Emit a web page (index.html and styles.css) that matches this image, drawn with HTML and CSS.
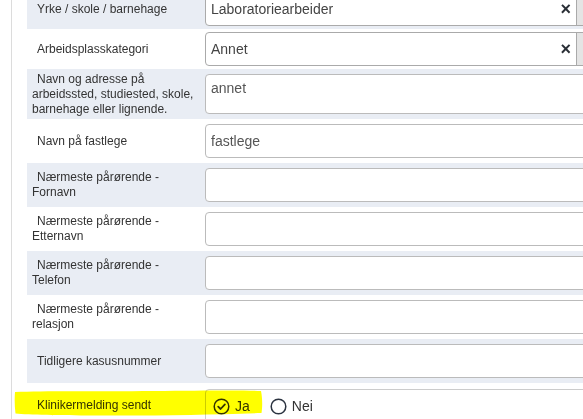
FILE: index.html
```html
<!DOCTYPE html>
<html lang="no">
<head>
<meta charset="utf-8">
<title>Skjema</title>
<link rel="stylesheet" href="styles.css">
</head>
<body>
<div class="page">
  <div class="form">
    <div class="row alt">
      <div class="label">Yrke / skole / barnehage</div>
      <div class="field sel">
        <div class="control select"><span class="sel-text">Laboratoriearbeider</span><span class="clear">×</span><span class="arrow"><span class="tri"></span></span></div>
      </div>
    </div>
    <div class="row">
      <div class="label">Arbeidsplasskategori</div>
      <div class="field sel">
        <div class="control select"><span class="sel-text">Annet</span><span class="clear">×</span><span class="arrow"><span class="tri"></span></span></div>
      </div>
    </div>
    <div class="row alt">
      <div class="label">Navn og adresse på arbeidssted, studiested, skole, barnehage eller lignende.</div>
      <div class="field">
        <div class="control area">annet</div>
      </div>
    </div>
    <div class="row">
      <div class="label">Navn på fastlege</div>
      <div class="field"><div class="control">fastlege</div></div>
    </div>
    <div class="row alt">
      <div class="label">Nærmeste pårørende - Fornavn</div>
      <div class="field"><div class="control"></div></div>
    </div>
    <div class="row">
      <div class="label">Nærmeste pårørende - Etternavn</div>
      <div class="field"><div class="control"></div></div>
    </div>
    <div class="row alt">
      <div class="label">Nærmeste pårørende - Telefon</div>
      <div class="field"><div class="control"></div></div>
    </div>
    <div class="row">
      <div class="label">Nærmeste pårørende - relasjon</div>
      <div class="field"><div class="control"></div></div>
    </div>
    <div class="row alt">
      <div class="label">Tidligere kasusnummer</div>
      <div class="field"><div class="control"></div></div>
    </div>
    <div class="row">
      <div class="label">Klinikermelding sendt</div>
      <div class="field radio-field">
        <div class="radios">
          <span class="opt">
            <svg class="rb" width="17" height="17" viewBox="0 0 17 17"><circle cx="8.5" cy="8.5" r="7.3" fill="none" stroke="#333" stroke-width="1.5"/><path d="M5.2 8.7 L7.6 11 L11.9 6.4" fill="none" stroke="#333" stroke-width="1.8" stroke-linecap="round" stroke-linejoin="round"/></svg>
            <span>Ja</span>
          </span>
          <span class="opt">
            <svg class="rb" width="17" height="17" viewBox="0 0 17 17"><circle cx="8.5" cy="8.5" r="7.3" fill="none" stroke="#2b3340" stroke-width="1.5"/></svg>
            <span>Nei</span>
          </span>
        </div>
      </div>
    </div>
  </div>
  <svg class="highlight" width="250" height="29" viewBox="0 0 250 29"><path d="M1 3 C30 1.5 80 2.5 140 2 C190 1.5 230 1 247 2 C248.5 9 248.5 18 247.5 24 C200 25.5 140 27 80 26.5 C45 26.3 15 26 1.5 24.5 C0.5 17 0.5 9 1 3 Z" fill="#ffff00"/></svg>
</div>
</body>
</html>
```

FILE: styles.css
```css
html, body {
  margin: 0;
  padding: 0;
  background: #fff;
  overflow: hidden;
}

body {
  font-family: "Liberation Sans", Arial, sans-serif;
  color: #333;
  width: 583px;
  height: 419px;
}

.page {
  position: relative;
  width: 583px;
  height: 419px;
  overflow: hidden;
}

.form {
  margin-left: 11px;
  margin-top: -11px;
  border-left: 1px solid #dcdcdc;
  padding-left: 15px;
  width: 640px;
}

.row {
  display: flex;
  align-items: center;
}

.row.alt {
  background: #e9edf4;
}

.label {
  flex: none;
  width: 178px;
  box-sizing: border-box;
  padding: 0 7px 0 5px;
  text-indent: 5px;
  font-size: 12px;
  line-height: 15px;
  color: #333;
}

.field {
  flex: none;
  width: 393px;
  padding: 5px 0;
}

.field.sel {
  padding: 3px 0;
}

.control {
  box-sizing: border-box;
  height: 34px;
  border: 1px solid #bbb;
  border-radius: 4px;
  background: #fff;
  padding: 0 5px;
  font-size: 14px;
  color: #555;
  display: flex;
  align-items: center;
}

.control.area {
  height: 40px;
  align-items: flex-start;
  padding-top: 5px;
  line-height: 16px;
}

.control.select {
  border-color: #aaa;
  padding-right: 0;
  color: #444;
}

.sel-text {
  flex: 1;
}

.clear {
  font-weight: bold;
  font-size: 18px;
  color: #2a2f36;
  margin-right: 5px;
  line-height: 1;
}

.arrow {
  align-self: stretch;
  width: 20px;
  border-left: 1px solid #aaa;
  background: #e4e4e4;
  border-radius: 0 3px 3px 0;
  display: flex;
  align-items: center;
  justify-content: center;
}

.tri {
  width: 0;
  height: 0;
  border-left: 4px solid transparent;
  border-right: 4px solid transparent;
  border-top: 5px solid #888;
}

.radios {
  box-sizing: border-box;
  height: 34px;
  margin-top: 1px;
  border: 1px solid #ccc;
  border-radius: 4px;
  display: flex;
  align-items: center;
  padding-left: 7px;
  gap: 20px;
  font-size: 14px;
  color: #333;
}

.opt {
  display: flex;
  align-items: center;
  gap: 5px;
}

.rb {
  display: block;
}

.highlight {
  position: absolute;
  left: 14px;
  top: 389px;
  mix-blend-mode: multiply;
}
```
